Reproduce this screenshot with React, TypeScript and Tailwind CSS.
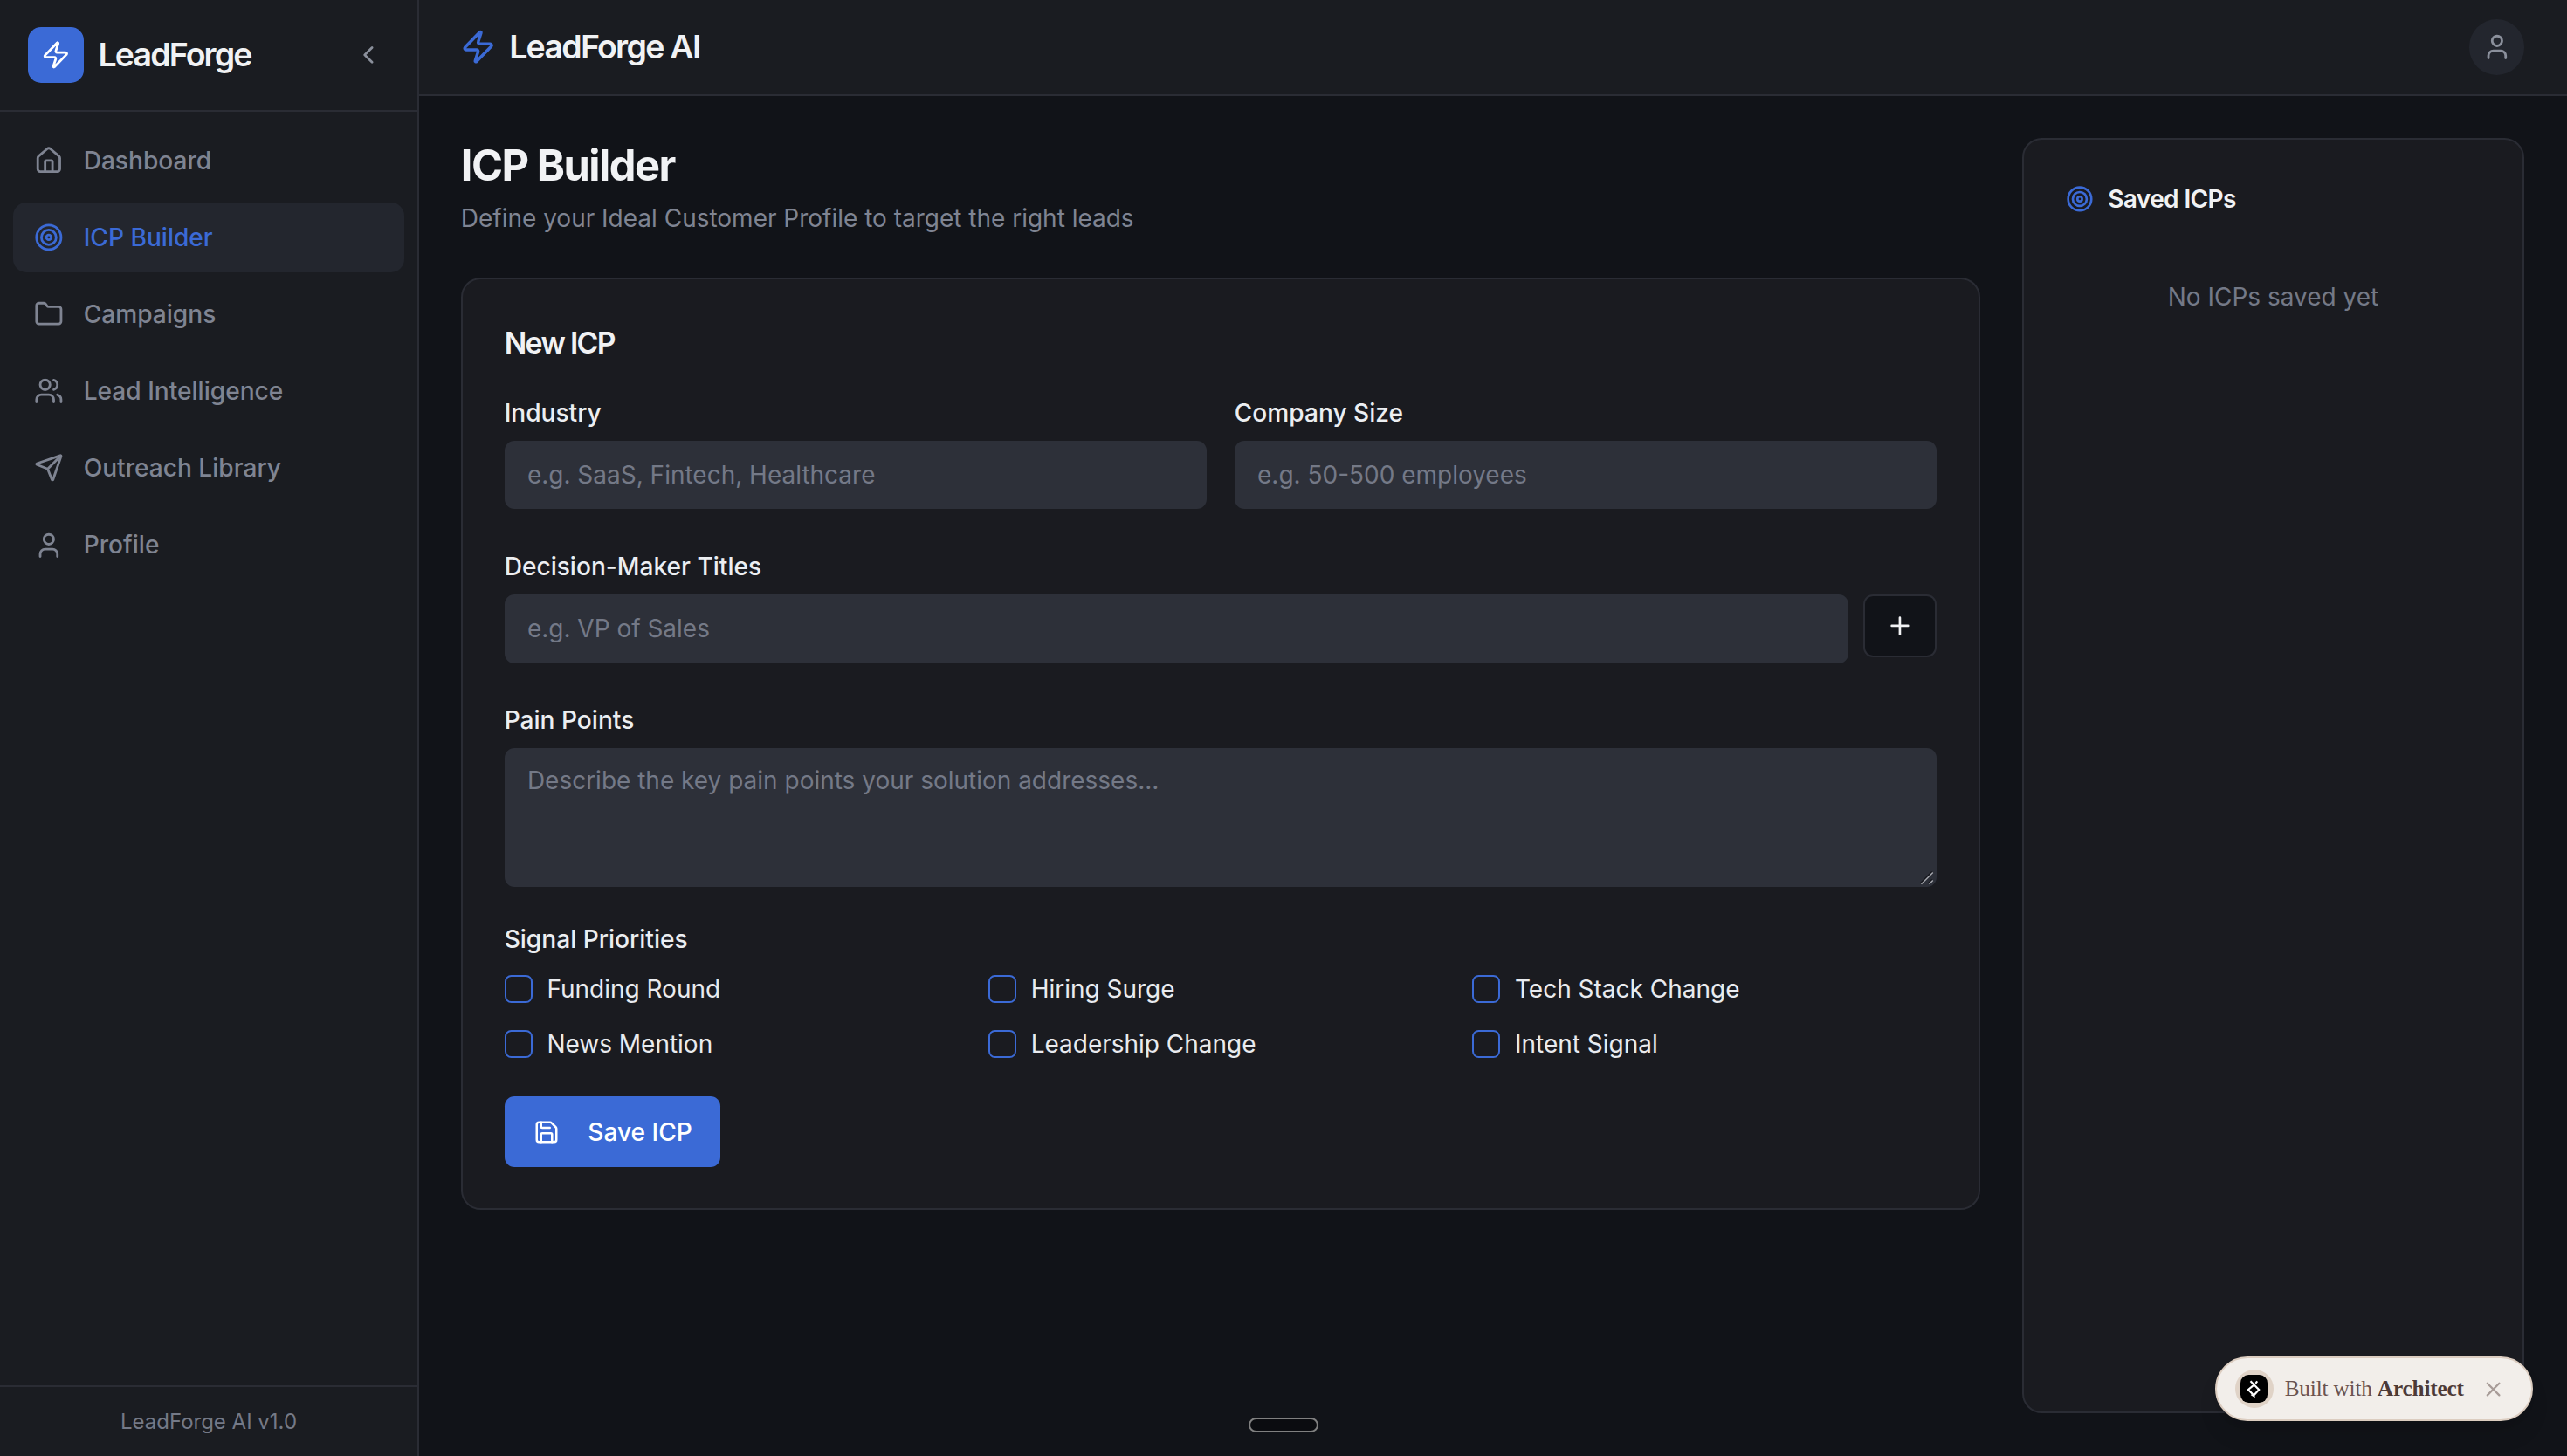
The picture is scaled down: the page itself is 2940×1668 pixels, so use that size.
import { ChevronLeft, Folder, House, Plus, Save, Send, Target, User, Users, X, Zap } from "lucide-react";

const nav = [
  { label: "Dashboard", Icon: House },
  { label: "ICP Builder", Icon: Target, active: true },
  { label: "Campaigns", Icon: Folder },
  { label: "Lead Intelligence", Icon: Users },
  { label: "Outreach Library", Icon: Send },
  { label: "Profile", Icon: User },
];

const signals = ["Funding Round", "Hiring Surge", "Tech Stack Change", "News Mention", "Leadership Change", "Intent Signal"];

const fieldClass =
  "w-full h-[42px] rounded-md bg-[#2d3039] px-[14px] text-[14.93px] text-[#e5e7eb] outline-none placeholder:text-[#747987]";

function Label({ children }: { children: React.ReactNode }) {
  return <label className="block pt-[0.5px] mb-[7.5px] text-[15px] leading-[18px] font-medium text-[#eceef1]">{children}</label>;
}

export default function App() {
  return (
    <div className="[zoom:1.875] relative flex w-[1568px] h-[889.6px] overflow-hidden bg-[#111318] font-[Inter,sans-serif]">
      <aside className="flex flex-col w-64 shrink-0 h-full bg-[#1a1c21] border-r-[1.1px] border-[#2a2c34]">
        <div className="flex items-center justify-between h-[68px] shrink-0 pl-[17px] pr-[21px] border-b-[1.1px] border-[#2a2c34]">
          <div className="flex items-center gap-[9px]">
            <div className="flex items-center justify-center size-[34px] rounded-lg bg-[#3b6ad6]">
              <Zap size={18} color="#ffffff" />
            </div>
            <span className="text-xl font-semibold tracking-[-1px] text-[#f1f2f4]">LeadForge</span>
          </div>
          <ChevronLeft size={18} color="#8b909c" />
        </div>
        <nav className="flex-1 flex flex-col gap-1 px-2 pt-[8.5px]">
          {nav.map(({ label, Icon, active }) => (
            <div
              key={label}
              className={`flex items-center gap-3 h-[43px] pl-[13px] rounded-lg text-[15px] font-medium ${
                active ? "bg-[#23262e] text-[#3b6ad6]" : "text-[#7f8492]"
              }`}
            >
              <Icon size={18} />
              <span>{label}</span>
            </div>
          ))}
        </nav>
        <div className="h-[43px] shrink-0 flex items-center justify-center border-t-[1.1px] border-[#2a2c34] text-[12.8px] text-[#747987]">
          LeadForge AI v1.0
        </div>
      </aside>

      <div className="flex-1 min-w-0 flex flex-col h-full">
        <header className="flex items-center justify-between h-[58.5px] shrink-0 pl-[25px] pr-[26px] bg-[#1a1c21] border-b-[1.1px] border-[#2a2c34]">
          <div className="flex items-center gap-2">
            <Zap size={22} color="#3b6ad6" />
            <span className="text-xl font-semibold tracking-[-0.92px] text-[#f1f2f4]">LeadForge AI</span>
          </div>
          <div className="flex items-center justify-center size-[34px] rounded-full bg-[#23262e]">
            <User size={18} color="#8b909c" />
          </div>
        </header>

        <main className="flex-1 min-h-0 flex gap-[25.5px] p-[26px] pl-[25.5px]">
          <div className="flex-1 min-w-0">
            <h1 className="text-[26px] leading-[34px] font-bold tracking-[-0.8px] text-[#f1f2f4]">ICP Builder</h1>
            <p className="mt-[3px] text-[14.93px] leading-6 text-[#7f8492]">Define your Ideal Customer Profile to target the right leads</p>

            <section className="mt-[24px] rounded-xl border-[1.1px] border-[#2a2c34] bg-[#1a1b20] pt-[26.5px] px-[25.5px] pb-[25px]">
              <h2 className="text-[18px] leading-[24px] font-semibold tracking-[-0.88px] text-[#f1f2f4] mb-[22px]">New ICP</h2>

              <div className="grid grid-cols-2 gap-[17px]">
                <div>
                  <Label>Industry</Label>
                  <input className={fieldClass} placeholder="e.g. SaaS, Fintech, Healthcare" />
                </div>
                <div>
                  <Label>Company Size</Label>
                  <input className={fieldClass} placeholder="e.g. 50-500 employees" />
                </div>
              </div>

              <div className="mt-[26px]">
                <Label>Decision-Maker Titles</Label>
                <div className="flex items-start gap-[9px]">
                  <input className={`${fieldClass} flex-1`} placeholder="e.g. VP of Sales" />
                  <button className="flex items-center justify-center shrink-0 w-[45px] h-[38.5px] rounded-md border-[1.1px] border-[#2a2c34] bg-[#111318] text-[#f1f2f4]">
                    <Plus size={17} />
                  </button>
                </div>
              </div>

              <div className="mt-[26px]">
                <Label>Pain Points</Label>
                <div className="relative">
                  <textarea
                    className="block w-full h-[85px] rounded-md bg-[#2d3039] px-[14px] py-[10px] text-[14.93px] leading-[20px] text-[#e5e7eb] outline-none resize-none placeholder:text-[#747987]"
                    placeholder="Describe the key pain points your solution addresses..."
                  />
                  <svg className="absolute right-0 bottom-0" width="10" height="10" viewBox="0 0 18.75 18.75" fill="none" strokeWidth="1.5">
                    <path d="M0.5 13.75 L13.75 0.5 M9.5 13.75 L13.75 9.5" stroke="#14151a" />
                    <path d="M1.5 14.75 L14.75 1.5 M10.5 14.75 L14.75 10.5" stroke="#a4a6ac" />
                  </svg>
                </div>
              </div>

              <div className="mt-[23px]">
                <Label>Signal Priorities</Label>
                <div className="grid grid-cols-3 gap-y-[14px] gap-x-3 pt-[3px]">
                  {signals.map((s) => (
                    <label key={s} className="flex items-center gap-[9px] h-5 text-[14.93px] text-[#e9ebef]">
                      <input type="checkbox" className="appearance-none size-[17px] rounded-[4px] border-[1.5px] border-[#3b6ad6] bg-transparent" />
                      <span>{s}</span>
                    </label>
                  ))}
                </div>
              </div>

              <button className="mt-[22px] flex items-center gap-[17px] h-[43px] pl-[18px] pr-[17px] rounded-md bg-[#3b6ad6] text-[15px] font-medium text-[#ffffff]">
                <Save size={16} />
                <span>Save ICP</span>
              </button>
            </section>
          </div>

          <aside className="w-[307px] shrink-0 h-full rounded-xl border-[1.1px] border-[#2a2c34] bg-[#1a1b20] p-[26px]">
            <div className="flex items-center gap-[8.5px] h-[20px]">
              <Target size={17} color="#3b6ad6" />
              <h3 className="text-[15px] font-semibold tracking-[-0.35px] text-[#f1f2f4]">Saved ICPs</h3>
            </div>
            <p className="mt-[40px] text-center text-[14.93px] leading-5 text-[#747987]">No ICPs saved yet</p>
          </aside>
        </main>
      </div>

      <div className="absolute left-[762.5px] top-[866px] w-[43px] h-[9px] rounded-full bg-[#0b0c10] border-[1.1px] border-[#808080]" />

      <div className="absolute left-[1353px] top-[829px] flex items-center w-[194px] h-[39.5px] rounded-full bg-[#f2eeea] border-[1.5px] border-[#dccdc0] pl-[11px] shadow-lg">
        <div className="flex items-center justify-center size-[23.5px] rounded-full bg-[#e0d3c7] shrink-0">
          <div className="flex items-center justify-center size-[17px] rounded-[5px] bg-black">
            <svg width="10" height="11" viewBox="0 0 14 16" fill="none" stroke="#ffffff" strokeWidth="1.7">
              <path d="M4 1 L11.5 8.5 L7 13.5 L2 8.5 L7.5 4" />
              <path d="M10 1 L8.5 3" />
              <path d="M4.5 13 L8 15" strokeWidth="1" />
            </svg>
          </div>
        </div>
        <span className="ml-[7px] whitespace-nowrap font-['Liberation_Serif',serif] text-[13.5px] tracking-[-0.1px] font-medium text-[#6b534f]">
          Built with <span className="font-bold text-[#4d3a37]">Architect</span>
        </span>
        <X size={14.5} color="#a89c98" className="ml-[11px]" />
      </div>
    </div>
  );
}
